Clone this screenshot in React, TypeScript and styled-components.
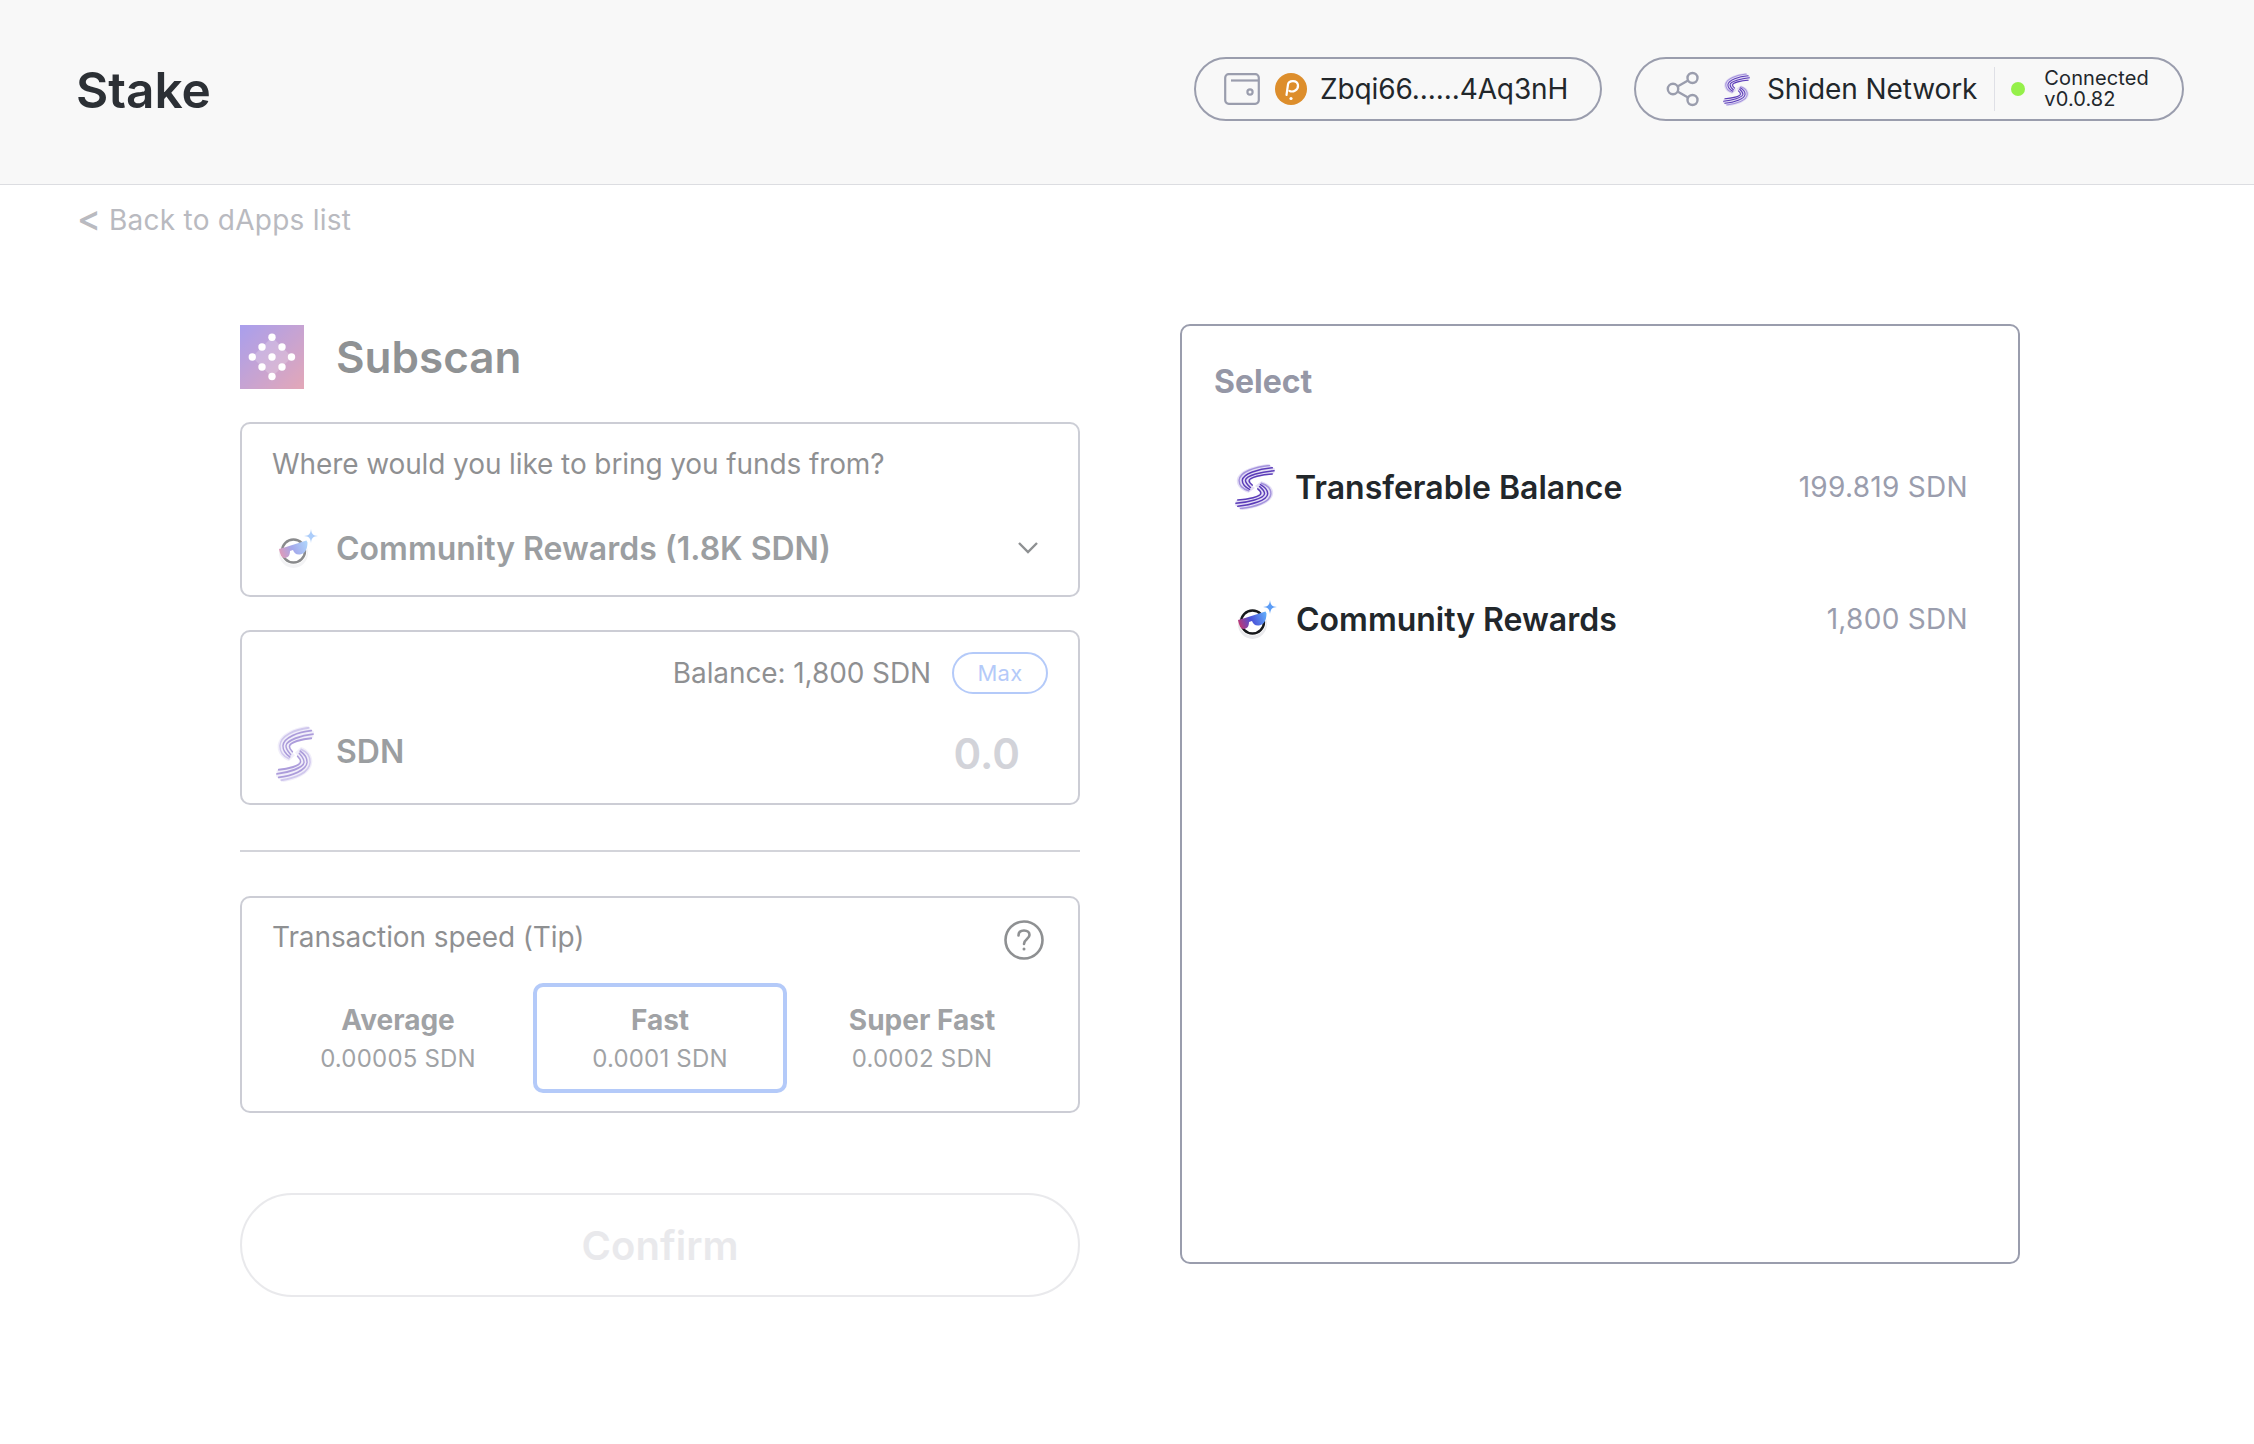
import React from 'react';
import styled, { createGlobalStyle } from 'styled-components';

const Global = createGlobalStyle`
  html, body { margin: 0; padding: 0; background: #fff; }
  body { font-family: Inter, "Liberation Sans", sans-serif; color: #22272b; }
  * { box-sizing: border-box; }
`;

const Page = styled.div`
  width: 2254px;
  height: 1444px;
  overflow: hidden;
  background: #fff;
`;

const Header = styled.header`
  height: 185px;
  background: #f8f8f8;
  border-bottom: 1px solid #dcdde1;
  padding: 0 70px 0 76px;
  display: flex;
  align-items: center;
  justify-content: space-between;
`;

const Title = styled.h1`
  margin: 0 0 5px;
  font-size: 49.6px;
  line-height: 58px;
  font-weight: 600;
  color: #2c3035;
`;

const HeaderRight = styled.div`
  display: flex;
  align-items: center;
  gap: 32px;
  margin-bottom: 6px;
`;

const Pill = styled.div<{ $w: number; $pl: number }>`
  width: ${(p) => p.$w}px;
  height: 64px;
  padding-left: ${(p) => p.$pl}px;
  border: 2px solid #9a9dad;
  border-radius: 32px;
  display: flex;
  align-items: center;
`;

const PillText = styled.span<{ $ml: number }>`
  margin-left: ${(p) => p.$ml}px;
  margin-bottom: 1px;
  font-size: 28px;
  letter-spacing: -0.1px;
  white-space: nowrap;
  color: #22272b;
`;

const IconSlot = styled.span<{ $ml?: number }>`
  display: inline-flex;
  margin-left: ${(p) => p.$ml ?? 0}px;
  flex: none;
`;

const PillDivider = styled.span`
  width: 1px;
  height: 44px;
  background: #dfe0e6;
  margin: 0 16px 0 17px;
`;

const StatusDot = styled.span`
  width: 14px;
  height: 14px;
  border-radius: 50%;
  background: #95f04a;
  margin-right: 19px;
`;

const Status = styled.span`
  font-size: 20px;
  line-height: 21px;
  letter-spacing: 0.1px;
  color: #22272b;
`;

const BackLink = styled.div`
  height: 35px;
  margin: 17px 0 0 77px;
  display: flex;
  align-items: center;
  font-size: 28px;
  line-height: 34px;
  letter-spacing: 0.25px;
  color: #b9bac0;
`;

const BackArrow = styled.span`
  width: 32px;
  margin-bottom: 3px;
  font-size: 36px;
  line-height: 34px;
  font-weight: 500;
  letter-spacing: 0;
`;

const Columns = styled.main`
  display: flex;
  align-items: flex-start;
  gap: 100px;
  padding: 88px 0 0 240px;
`;

const LeftColumn = styled.section`
  width: 840px;
  opacity: 0.5;
`;

const AppRow = styled.div`
  height: 64px;
  display: flex;
  align-items: center;
  gap: 32px;
  margin-bottom: 33px;
`;

const AppName = styled.h2`
  margin: 0;
  font-size: 44px;
  font-weight: 600;
  color: #22272b;
`;

const Card = styled.div<{ $h: number }>`
  height: ${(p) => p.$h}px;
  border: 2px solid #9a9dad;
  border-radius: 10px;
  padding: 0 30px;
`;

const CardGap = styled.div<{ $h: number }>`
  height: ${(p) => p.$h}px;
`;

const Question = styled.div`
  padding-top: 23px;
  font-size: 28px;
  line-height: 34px;
  letter-spacing: -0.1px;
  color: #1f2327;
`;

const SelectRow = styled.div`
  margin-top: 43px;
  height: 48px;
  display: flex;
  align-items: center;
  padding: 0 10px 0 6px;
`;

const SelectLabel = styled.span`
  margin-left: 16px;
  font-size: 32px;
  font-weight: 600;
  color: #3a3f45;
  flex: 1;
`;

const BalanceRow = styled.div`
  padding-top: 19px;
  height: 62px;
  display: flex;
  align-items: center;
  justify-content: flex-end;
  gap: 21px;
  font-size: 28px;
  letter-spacing: -0.1px;
  color: #1f2327;
`;

const MaxButton = styled.span`
  width: 96px;
  height: 42px;
  border: 2px solid #6c97f5;
  border-radius: 21px;
  display: flex;
  align-items: center;
  justify-content: center;
  font-size: 22px;
  letter-spacing: 0.3px;
  color: #6c97f5;
`;

const AmountRow = styled.div`
  margin-top: 31px;
  height: 58px;
  display: flex;
  align-items: center;
  padding-left: 4px;
`;

const TokenName = styled.span`
  margin-left: 22px;
  font-size: 32px;
  font-weight: 600;
  color: #3a3f45;
  flex: 1;
  padding-bottom: 6px;
`;

const AmountValue = styled.span`
  font-size: 42px;
  font-weight: 600;
  color: #a6a8b4;
  margin-right: 28px;
  padding-bottom: 2px;
`;

const Divider = styled.hr`
  border: 0;
  height: 2px;
  margin: 45px 0 44px;
  background: #a9abb6;
`;

const SpeedHead = styled.div`
  height: 85px;
  padding-top: 22px;
  padding-right: 4px;
  display: flex;
  justify-content: space-between;
  align-items: flex-start;
  font-size: 28px;
  line-height: 34px;
  letter-spacing: -0.1px;
  color: #1f2327;
`;

const SpeedGrid = styled.div`
  display: grid;
  grid-template-columns: repeat(3, 254px);
  gap: 8px;
  margin: 0 -1px;
`;

const SpeedOption = styled.div<{ $on?: boolean }>`
  height: 110px;
  border: 4px solid ${(p) => (p.$on ? '#6c97f5' : 'transparent')};
  border-radius: 10px;
  display: flex;
  flex-direction: column;
  align-items: center;
  justify-content: center;
  gap: 7px;
`;

const SpeedName = styled.span`
  font-size: 28px;
  line-height: 34px;
  font-weight: 700;
  color: #43474d;
`;

const SpeedValue = styled.span`
  font-size: 24px;
  line-height: 30px;
  letter-spacing: 0.2px;
  color: #43474d;
`;

const ConfirmButton = styled.button`
  display: block;
  width: 100%;
  height: 104px;
  margin-top: 80px;
  background: #fff;
  border: 2px solid #d4d5da;
  border-radius: 52px;
  font-family: inherit;
  font-size: 40px;
  font-weight: 600;
  color: #d4d5da;
`;

const SelectPanel = styled.aside`
  width: 840px;
  height: 940px;
  margin-top: -1px;
  border: 2px solid #9a9dad;
  border-radius: 10px;
  padding: 36px 50px 0 32px;
`;

const PanelTitle = styled.div`
  font-size: 32px;
  line-height: 40px;
  font-weight: 700;
  color: #9597a6;
  margin-bottom: 61px;
`;

const SourceRow = styled.div`
  height: 48px;
  margin-bottom: 84px;
  display: flex;
  align-items: center;
  padding-left: 21px;
`;

const SourceName = styled.span<{ $ml: number }>`
  margin-left: ${(p) => p.$ml}px;
  flex: 1;
  font-size: 32px;
  font-weight: 600;
  color: #22272b;
`;

const SourceAmount = styled.span`
  font-size: 28px;
  letter-spacing: 0.3px;
  color: #9a9dad;
`;

const lobeArcs = [
  { d: 'M38 1.500C22 3 5 8 4.500 17C4.500 22 8 26 15 28', c: '#a392dc' },
  { d: 'M41 4C26 5 8.500 10 8 17C8 21 11 24 16 26.500', c: '#5b3cb8' },
  { d: 'M43 7C30 8 12 12 11.500 17C11.500 20 14 22 17 24.500', c: '#5b3cb8' },
  { d: 'M41 10.500C30 11 15.500 14 15.500 17.500C15.500 19 17 20.500 19 22', c: '#5b3cb8' },
];

const ShidenLogo = ({ w, h }: { w: number; h: number }) => (
  <svg width={w} height={h} viewBox="0 0 44 48" preserveAspectRatio="none" fill="none">
    {[0, 180].map((r) => (
      <g key={r} transform={`rotate(${r} 22 24)`}>
        <path d="M36 0C18 2 2 8 2 18C2 23 7 28 15 30L22 25C16 21 16 17 20 15C26 13 36 12 43 10L44 5Z" fill="#c9bdee" opacity="0.5" />
        {lobeArcs.map((a) => (
          <path key={a.d} d={a.d} stroke={a.c} strokeWidth="1.600" strokeLinecap="round" />
        ))}
      </g>
    ))}
  </svg>
);

const CommunityLogo = ({ id }: { id: string }) => (
  <svg width="42" height="42" viewBox="0 -2 42 42" fill="none">
    <defs>
      <linearGradient id={id} x1="2" y1="26" x2="30" y2="14" gradientUnits="userSpaceOnUse">
        <stop offset="0" stopColor="#c4366f" />
        <stop offset="0.45" stopColor="#4b53d8" />
        <stop offset="1" stopColor="#62b0fb" />
      </linearGradient>
    </defs>
    <ellipse cx="15.500" cy="24" rx="14.500" ry="15" fill="#e9e9ec" />
    <circle cx="15.500" cy="22" r="13.500" fill="#fff" />
    <circle cx="15.500" cy="22" r="11.500" stroke="#16181b" strokeWidth="2.400" />
    <path d="M1 20L8 18L28.500 11.500L29.500 13.500C29.500 20 27 25 22 25.500C18 26 16 23.500 15 21L12 22C12 27 9.500 29 6.500 29C3.500 29 2 25 1 20Z" fill={`url(#${id})`} />
    <path d="M33 0C33.500 5 35 6.500 40 7C35 7.500 33.500 9 33 14C32.500 9 31 7.500 26 7C31 6.500 32.500 5 33 0Z" fill="#5b9cf6" />
  </svg>
);

const SubscanLogo = () => (
  <svg width="64" height="64" viewBox="0 0 64 64">
    <defs>
      <linearGradient id="subscanBg" x1="0" y1="0" x2="64" y2="64" gradientUnits="userSpaceOnUse">
        <stop offset="0" stopColor="#5541dd" />
        <stop offset="1" stopColor="#c95272" />
      </linearGradient>
    </defs>
    <rect width="64" height="64" fill="url(#subscanBg)" />
    <path d="M22 22L32 12L42 22L32 32ZM32 32L42 22L52 32L42 42ZM12 32L22 22L32 32L22 42ZM22 42L32 32L42 42L32 52Z" fill="#fff" opacity="0.2" />
    {[[32, 12.300], [22, 22], [42, 22], [12.300, 32], [32, 32], [51.500, 32], [22, 42], [42, 42], [32, 51.500]].map(([x, y]) => (
      <circle key={`${x}-${y}`} cx={x} cy={y} r="3.700" fill="#fff" />
    ))}
  </svg>
);

const PolkadotLogo = () => (
  <svg width="32" height="32" viewBox="0 0 32 32" fill="none">
    <circle cx="16" cy="16" r="16" fill="#dd8e2c" />
    <path d="M11.500 22L13 11.500C13.500 7.500 22 6.500 23 12C23.500 17 18 19.500 14.500 18" stroke="#fff" strokeWidth="2.200" strokeLinecap="round" />
    <circle cx="16" cy="25.500" r="1.600" fill="#fff" />
  </svg>
);

const WalletIcon = () => (
  <svg width="36" height="32" viewBox="0 0 36 32" fill="none" stroke="#9a9dad" strokeWidth="2.200">
    <rect x="1.200" y="1.200" width="33.600" height="29.600" rx="3.500" />
    <path d="M7 7.500H35" />
    <circle cx="26" cy="19" r="2.600" />
  </svg>
);

const ShareIcon = () => (
  <svg width="34" height="36" viewBox="0 0 34 36" fill="none" stroke="#9a9dad" strokeWidth="2.400">
    <circle cx="26.500" cy="7" r="5" />
    <circle cx="7" cy="18" r="5.200" />
    <circle cx="26.500" cy="29" r="5" />
    <path d="M11.500 15.500L22 9.500M11.500 20.500L22 26.500" />
  </svg>
);

const Chevron = () => (
  <svg width="20" height="12" viewBox="0 0 20 12" fill="none" stroke="#1f2327" strokeWidth="2.400">
    <path d="M1 1L10 10L19 1" />
  </svg>
);

const HelpIcon = () => (
  <svg width="40" height="40" viewBox="0 0 40 40" fill="none" stroke="#1f2327" strokeWidth="2.600">
    <circle cx="20" cy="20" r="18.500" />
    <path d="M14.500 15.500C14.500 12 17 10.500 20 10.500C23.500 10.500 25.500 12.500 25.500 15C25.500 19 20 19 20 24" strokeLinecap="round" />
    <circle cx="20" cy="29" r="1.500" fill="#1f2327" stroke="none" />
  </svg>
);

const speeds = [
  { name: 'Average', value: '0.00005 SDN' },
  { name: 'Fast', value: '0.0001 SDN', on: true },
  { name: 'Super Fast', value: '0.0002 SDN' },
];

export default function App() {
  return (
    <Page>
      <Global />
      <Header>
        <Title>Stake</Title>
        <HeaderRight>
          <Pill $w={408} $pl={28}>
            <WalletIcon />
            <IconSlot $ml={15}><PolkadotLogo /></IconSlot>
            <PillText $ml={13}>Zbqi66......4Aq3nH</PillText>
          </Pill>
          <Pill $w={550} $pl={30}>
            <ShareIcon />
            <IconSlot $ml={23}><ShidenLogo w={27} h={33} /></IconSlot>
            <PillText $ml={17}>Shiden Network</PillText>
            <PillDivider />
            <StatusDot />
            <Status>Connected<br />v0.0.82</Status>
          </Pill>
        </HeaderRight>
      </Header>
      <BackLink><BackArrow>&lt;</BackArrow><span>Back to dApps list</span></BackLink>
      <Columns>
        <LeftColumn>
          <AppRow>
            <SubscanLogo />
            <AppName>Subscan</AppName>
          </AppRow>
          <Card $h={175}>
            <Question>Where would you like to bring you funds from?</Question>
            <SelectRow>
              <CommunityLogo id="communityA" />
              <SelectLabel>Community Rewards (1.8K SDN)</SelectLabel>
              <Chevron />
            </SelectRow>
          </Card>
          <CardGap $h={33} />
          <Card $h={175}>
            <BalanceRow>
              <span>Balance: 1,800 SDN</span>
              <MaxButton>Max</MaxButton>
            </BalanceRow>
            <AmountRow>
              <ShidenLogo w={38} h={56} />
              <TokenName>SDN</TokenName>
              <AmountValue>0.0</AmountValue>
            </AmountRow>
          </Card>
          <Divider />
          <Card $h={217}>
            <SpeedHead>
              <span>Transaction speed (Tip)</span>
              <HelpIcon />
            </SpeedHead>
            <SpeedGrid>
              {speeds.map((s) => (
                <SpeedOption key={s.name} $on={s.on}>
                  <SpeedName>{s.name}</SpeedName>
                  <SpeedValue>{s.value}</SpeedValue>
                </SpeedOption>
              ))}
            </SpeedGrid>
          </Card>
          <ConfirmButton>Confirm</ConfirmButton>
        </LeftColumn>
        <SelectPanel>
          <PanelTitle>Select</PanelTitle>
          <SourceRow>
            <ShidenLogo w={40} h={46} />
            <SourceName $ml={20}>Transferable Balance</SourceName>
            <SourceAmount>199.819 SDN</SourceAmount>
          </SourceRow>
          <SourceRow>
            <IconSlot $ml={2}><CommunityLogo id="communityB" /></IconSlot>
            <SourceName $ml={17}>Community Rewards</SourceName>
            <SourceAmount>1,800 SDN</SourceAmount>
          </SourceRow>
        </SelectPanel>
      </Columns>
    </Page>
  );
}
